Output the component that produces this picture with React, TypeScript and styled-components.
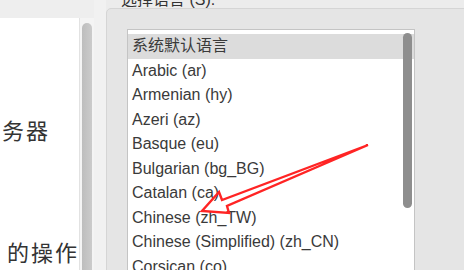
import React from "react";
import styled, { createGlobalStyle } from "styled-components";

const GlobalStyle = createGlobalStyle`
  html, body {
    margin: 0;
    padding: 0;
    background: #ececec;
    overflow: hidden;
  }
  body {
    font-family: "Liberation Sans", "Noto Sans CJK SC", sans-serif;
  }
`;

const Window = styled.div`
  position: relative;
  width: 464px;
  height: 270px;
  display: flex;
  overflow: hidden;
  background: #ececec;
  color: #3c3c3c;
`;

const SidePane = styled.div`
  width: 94px;
  display: flex;
  flex-direction: column;
  background: #eeeeee;
`;

const SideBody = styled.div`
  flex: 1;
  margin-top: 18px;
  display: flex;
`;

const LabelColumn = styled.div`
  width: 79px;
  background: #ffffff;
  display: flex;
  flex-direction: column;
  padding-top: 100px;
  box-sizing: border-box;
`;

const Label = styled.div<{ $gap?: number; $end: number }>`
  width: ${(p) => p.$end + 2}px;
  height: 28px;
  margin-top: ${(p) => p.$gap ?? 0}px;
  display: flex;
  justify-content: flex-end;
  align-items: center;
  overflow: hidden;
  white-space: nowrap;
  font-size: 22px;
  letter-spacing: 2px;
  line-height: 28px;
  color: #333333;
`;

const SideTrack = styled.div`
  width: 15px;
  background: #f4f4f4;
  border-left: 1px solid #e2e2e2;
  box-sizing: border-box;
  padding: 5px 2px 0 2px;
`;

const SideThumb = styled.div`
  height: 100%;
  border-radius: 5px 5px 0 0;
  background: linear-gradient(to right, #bdbdbd, #cbcbcb);
`;

const Gutter = styled.div`
  width: 12px;
  background: #f1f1f1;
`;

const MainPane = styled.div`
  flex: 1;
  display: flex;
  flex-direction: column;
`;

const Heading = styled.div`
  height: 8px;
  display: flex;
  align-items: flex-end;
  padding-left: 15px;
  font-size: 16px;
  line-height: 16px;
  color: #333333;
  white-space: nowrap;
`;

const GroupBox = styled.div`
  flex: 1;
  margin-right: -20px;
  background: #e5e5e5;
  border: 1px solid #d5d5d5;
  border-radius: 5px 0 0 0;
  padding: 20px 0 0 20px;
  display: flex;
`;

const ListBox = styled.div`
  position: relative;
  width: 288px;
  background: #ffffff;
  border: 1px solid #c4c4c4;
  border-bottom: none;
  box-sizing: border-box;
  padding-top: 4px;
`;

const Row = styled.div<{ $selected?: boolean }>`
  height: 24.5px;
  line-height: 24.5px;
  padding-left: 4px;
  font-size: 16px;
  white-space: nowrap;
  color: #3a3a3a;
  background: ${(p) => (p.$selected ? "#dcdcdc" : "transparent")};
`;

const ListThumb = styled.div`
  position: absolute;
  top: 3px;
  right: 2px;
  width: 9px;
  height: 175px;
  border-radius: 5px;
  background: #8e8e8e;
`;

const Annotation = styled.svg`
  position: absolute;
  left: 0;
  top: 0;
  pointer-events: none;
`;

const languages = [
  "系统默认语言",
  "Arabic (ar)",
  "Armenian (hy)",
  "Azeri (az)",
  "Basque (eu)",
  "Bulgarian (bg_BG)",
  "Catalan (ca)",
  "Chinese (zh_TW)",
  "Chinese (Simplified) (zh_CN)",
  "Corsican (co)",
];

export default function App() {
  return (
    <>
      <GlobalStyle />
      <Window>
        <SidePane>
          <SideBody>
            <LabelColumn>
              <Label $end={48}>务器</Label>
              <Label $end={77} $gap={94}>的操作</Label>
            </LabelColumn>
            <SideTrack>
              <SideThumb />
            </SideTrack>
          </SideBody>
        </SidePane>
        <Gutter />
        <MainPane>
          <Heading>选择语言 (S):</Heading>
          <GroupBox>
            <ListBox>
              {languages.map((lang, i) => (
                <Row key={lang} $selected={i === 0}>
                  {lang}
                </Row>
              ))}
              <ListThumb />
            </ListBox>
          </GroupBox>
        </MainPane>
        <Annotation width="464" height="270" viewBox="0 0 464 270">
          <polygon
            points="368,145 222,200 219,192 202,211 229,213 227,206"
            fill="none"
            stroke="#ff2424"
            strokeWidth="2.4"
            strokeLinejoin="miter"
          />
        </Annotation>
      </Window>
    </>
  );
}
